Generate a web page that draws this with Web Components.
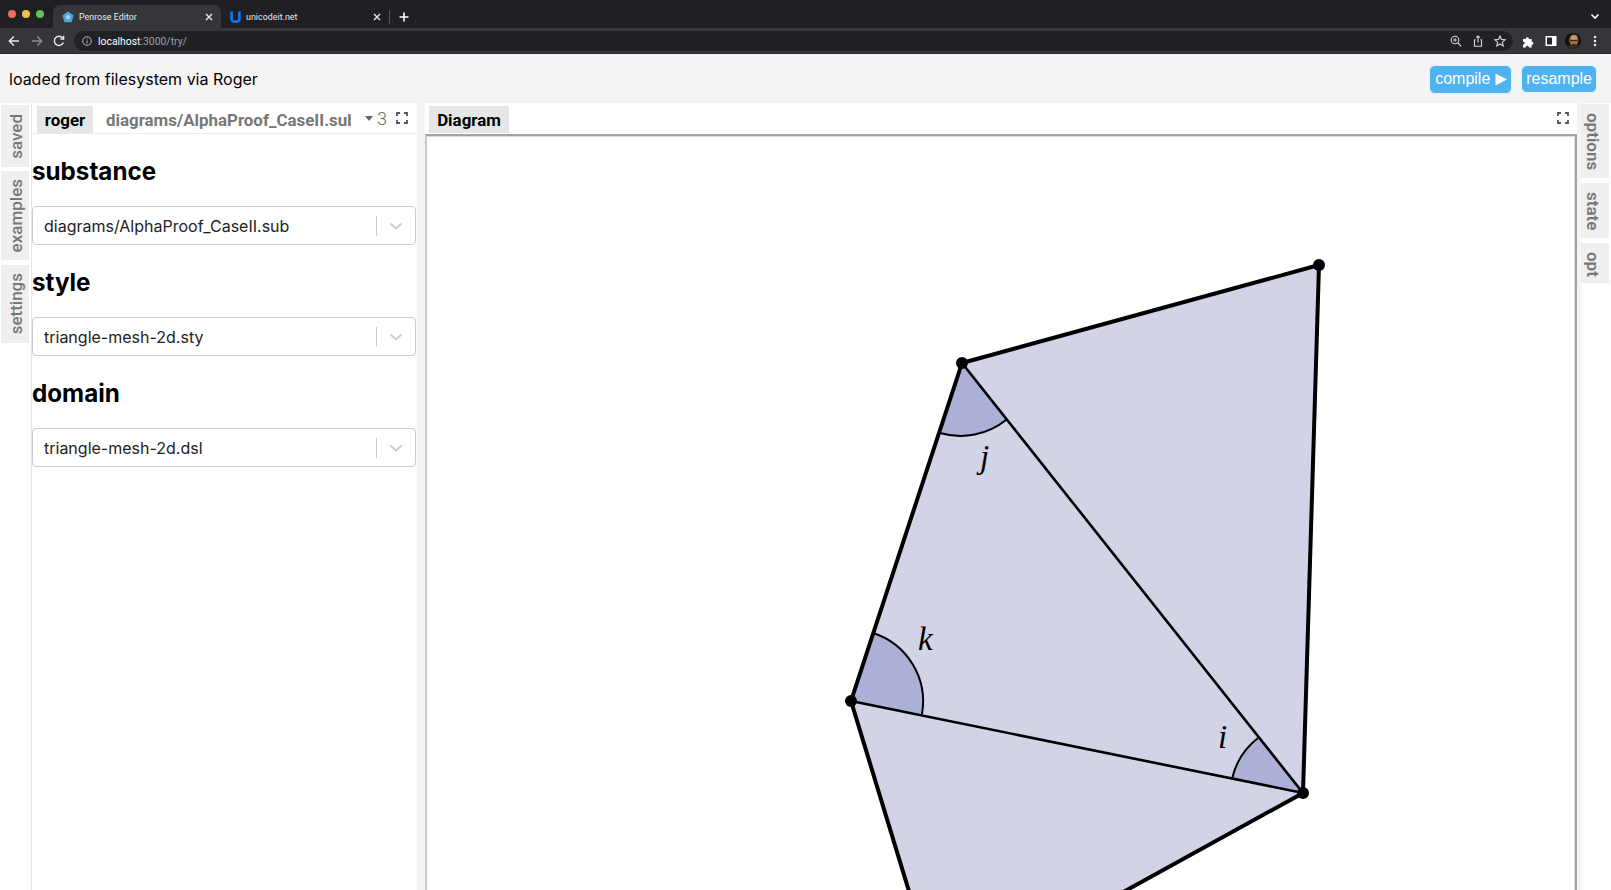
<!DOCTYPE html>
<html>
<head>
<meta charset="utf-8">
<title>Penrose Editor</title>
<style>
	html, body { margin: 0; height: 100%; overflow: hidden; background: #fff; }
	body { display: flex; flex-direction: column; height: 890px; font-family: "Inter", "Liberation Sans", sans-serif; }
</style>
</head>
<body>
<browser-chrome></browser-chrome>
<app-header>loaded from filesystem via Roger</app-header>
<editor-layout>
	<side-strip slot="left" side="left">
		<side-tab style="height:62px">saved</side-tab>
		<side-tab style="height:89px">examples</side-tab>
		<side-tab style="height:78px;margin-top:1px">settings</side-tab>
	</side-strip>
	<left-panel slot="panel">
		<file-select heading="substance">diagrams/AlphaProof_CaseII.sub</file-select>
		<file-select heading="style">triangle-mesh-2d.sty</file-select>
		<file-select heading="domain">triangle-mesh-2d.dsl</file-select>
	</left-panel>
	<diagram-panel slot="diagram"></diagram-panel>
	<side-strip slot="right" side="right">
		<side-tab style="height:74px">options</side-tab>
		<side-tab style="height:55px;margin-top:1px">state</side-tab>
		<side-tab style="height:40px;margin-top:1px">opt</side-tab>
	</side-strip>
</editor-layout>

<script>
(function () {
	//fullscreen corners used by both tab strips
	const expandIcon = `<svg width="12" height="12" viewBox="0 0 12 12" fill="none" stroke="#555" stroke-width="1.8"><path d="M1 4V1h3M8 1h3v3M11 8v3H8M4 11H1V8"/></svg>`;

	class BrowserChrome extends HTMLElement {
		constructor() {
			super();
			this.attachShadow({ mode: "open" }).innerHTML = `
			<style>
				:host { display: block; flex: none; font-family: "Roboto", "Liberation Sans", sans-serif; color: #e8eaed; }
				.strip { height: 28px; background: #1f2024; display: flex; align-items: flex-end; position: relative; }
				.lights { display: flex; gap: 6px; padding: 0 0 10px 8px; width: 53px; box-sizing: border-box; flex: none; }
				.lights i { width: 8px; height: 8px; border-radius: 50%; display: block; flex: none; }
				.tab { height: 23px; width: 168px; flex: none; box-sizing: border-box; display: flex; align-items: center; font-size: 8.8px; padding: 0 8px 0 9px; border-radius: 7px 7px 0 0; }
				.tab.on { background: #35363a; }
				.tab span { flex: 1; margin-left: 5px; white-space: nowrap; letter-spacing: 0.05px; }
				.sep { width: 1px; height: 14px; background: #55565a; margin: 0 0 4px 0; flex: none; }
				.plus { margin: 0 0 6px 9px; flex: none; display: flex; }
				.more { position: absolute; left: 1590px; top: 13px; display: flex; }
				.bar { height: 26px; background: #35363a; display: flex; align-items: center; box-sizing: border-box; border-bottom: 1px solid #26272a; padding-top: 1px; }
				.nav { display: flex; align-items: center; width: 74px; flex: none; padding-left: 8px; gap: 10.5px; box-sizing: border-box; }
				.url { width: 1439px; height: 20px; flex: none; background: #202124; border-radius: 10px; display: flex; align-items: center; box-sizing: border-box; padding: 0 0 0 8px; font-size: 10.4px; color: #9aa0a6; }
				.url b { font-weight: 400; color: #fff; }
				.url .addr { margin-left: 6px; flex: 1; }
				.url .ico { display: flex; gap: 10px; padding-right: 7px; align-items: center; }
				.tools { display: flex; align-items: center; margin-left: 9px; gap: 10px; }
				.avatar { width: 16px; height: 16px; flex: none; margin-left: -2px; }
			</style>
			<div class="strip">
				<div class="lights"><i style="background:#ed6a5e"></i><i style="background:#f4bf4f"></i><i style="background:#61c454"></i></div>
				<div class="tab on">
					<svg width="12" height="12" viewBox="0 0 12 12"><polygon points="6,0.5 11.6,4.6 9.5,11.2 2.5,11.2 0.4,4.6" fill="#4aa8e0"/><polygon points="6,3.8 8.4,5.5 7.5,8.3 4.5,8.3 3.6,5.5" fill="#9fd4f2"/></svg>
					<span>Penrose Editor</span>
					<svg width="8" height="8" viewBox="0 0 8 8" stroke="#e8eaed" stroke-width="1.4"><path d="M1 1l6 6M7 1L1 7"/></svg>
				</div>
				<div class="tab">
					<svg width="11" height="12" viewBox="0 0 11 12" fill="none" stroke="#1a73e8" stroke-width="2.6"><path d="M1.6 0.5V8a2.6 2.6 0 0 0 2.6 2.6h2.6A2.6 2.6 0 0 0 9.4 8V0.5"/></svg>
					<span>unicodeit.net</span>
					<svg width="8" height="8" viewBox="0 0 8 8" stroke="#e8eaed" stroke-width="1.4"><path d="M1 1l6 6M7 1L1 7"/></svg>
				</div>
				<div class="sep"></div>
				<div class="plus"><svg width="10" height="10" viewBox="0 0 10 10" stroke="#fff" stroke-width="1.6"><path d="M5 0.5v9M0.5 5h9"/></svg></div>
				<div class="more"><svg width="10" height="7" viewBox="0 0 10 7" fill="none" stroke="#fff" stroke-width="1.6"><path d="M1.5 1.5L5 5l3.5-3.5"/></svg></div>
			</div>
			<div class="bar">
				<div class="nav">
					<svg width="12" height="12" viewBox="0 0 12 12" fill="none" stroke="#e8eaed" stroke-width="1.4"><path d="M11 6H1.5M5.8 1.5L1.3 6l4.5 4.5"/></svg>
					<svg width="12" height="12" viewBox="0 0 12 12" fill="none" stroke="#8b8c8f" stroke-width="1.4"><path d="M1 6h9.5M6.2 1.5L10.7 6l-4.5 4.5"/></svg>
					<svg width="12" height="12" viewBox="0 0 12 12" fill="none" stroke="#e8eaed" stroke-width="1.4"><path d="M10.3 7.4A4.6 4.6 0 1 1 9.6 3"/><path d="M10.6 0.8v3.2H7.4" /></svg>
				</div>
				<div class="url">
					<svg width="10" height="10" viewBox="0 0 10 10" fill="none" stroke="#c4c7c9" stroke-width="0.9"><circle cx="5" cy="5" r="4.3"/><path d="M5 4.4v3M5 2.4v1"/></svg>
					<span class="addr"><b>localhost</b>:3000/try/</span>
					<span class="ico">
						<svg width="12" height="12" viewBox="0 0 12 12" fill="none" stroke="#d5d7d9" stroke-width="1.1"><circle cx="5" cy="5" r="3.8"/><path d="M8 8l3.3 3.3M3.2 5h3.6M5 3.2v3.6"/></svg>
						<svg width="12" height="12" viewBox="0 0 12 12" fill="none" stroke="#d5d7d9" stroke-width="1.1"><path d="M3.6 4.8H2.5v6.4h7V4.8H8.4M6 7.5V1M4.2 2.6L6 0.9l1.8 1.7"/></svg>
						<svg width="12" height="12" viewBox="0 0 12 12" fill="none" stroke="#d5d7d9" stroke-width="1.1"><polygon points="6,1 7.5,4.4 11.2,4.8 8.4,7.2 9.2,10.9 6,9 2.8,10.9 3.6,7.2 0.8,4.8 4.5,4.4"/></svg>
					</span>
				</div>
				<div class="tools">
					<svg width="13" height="13" viewBox="0 0 13 13" fill="#fff"><path d="M1 4h2.6a1.7 1.7 0 1 1 3.4 0H9.6v2.6a1.7 1.7 0 1 1 0 3.4V12.4H7a1.7 1.7 0 1 0-3.4 0H1V9.8a1.7 1.7 0 1 0 0-3.4z"/></svg>
					<svg width="12" height="12" viewBox="0 0 12 12"><rect x="0.5" y="1" width="11" height="10" fill="#fff"/><rect x="2" y="2.5" width="5" height="7" fill="#26272a"/></svg>
					<svg class="avatar" viewBox="0 0 16 16"><defs><clipPath id="av"><circle cx="8" cy="8" r="8"/></clipPath></defs><g clip-path="url(#av)"><rect width="16" height="16" fill="#17120f"/><ellipse cx="8.8" cy="7.2" rx="4.6" ry="5.8" fill="#9a6a45"/><ellipse cx="9" cy="4.4" rx="3.2" ry="2.2" fill="#c79a72"/><path d="M5.2 7h7.4v1.1H5.2zM7 11h3.6v.9H7z" fill="#33241a"/><path d="M1 16c0-2.6 3-4 7-4s7 1.4 7 4z" fill="#3b2a1e"/></g></svg>
					<svg width="4" height="12" viewBox="0 0 4 12" fill="#e8eaed" style="margin-left:2px"><circle cx="2" cy="2" r="1.3"/><circle cx="2" cy="6" r="1.3"/><circle cx="2" cy="10" r="1.3"/></svg>
				</div>
			</div>`;
		}
	}

	class AppHeader extends HTMLElement {
		constructor() {
			super();
			this.attachShadow({ mode: "open" }).innerHTML = `
			<style>
				:host { display: flex; flex: none; height: 49px; align-items: center; justify-content: space-between; background: #f4f4f4; padding: 0 14px 0 9px; box-sizing: border-box; font-size: 16px; color: #000; }
				.btns { display: flex; gap: 9px; align-items: center; margin-top: 1px; }
				button { font: 16px "Liberation Sans", Arial, sans-serif; color: #fff; background: #4fb2f1; border: 1px solid #e4f2fb; border-radius: 6px; height: 28px; padding: 0 4px; display: flex; align-items: center; gap: 5px; }
				.compile { width: 83px; height: 29px; padding: 0 0 0 5px; }
			</style>
			<span><slot></slot></span>
			<div class="btns">
				<button class="compile">compile<svg width="12" height="13" viewBox="0 0 12 13" fill="#fff"><polygon points="0.5,0.5 12,6.5 0.5,12.5"/></svg></button>
				<button>resample</button>
			</div>`;
		}
	}

	class EditorLayout extends HTMLElement {
		constructor() {
			super();
			this.attachShadow({ mode: "open" }).innerHTML = `
			<style>
				:host { display: grid; flex: 1; min-height: 0; grid-template-columns: 32px 385px 8px 1152px 34px; background: #f4f4f4; overflow: hidden; }
				.gap { background: #f4f4f4; }
			</style>
			<slot name="left"></slot>
			<slot name="panel"></slot>
			<div class="gap"></div>
			<slot name="diagram"></slot>
			<slot name="right"></slot>`;
		}
	}

	class SideStrip extends HTMLElement {
		constructor() {
			super();
			this.attachShadow({ mode: "open" }).innerHTML = `
			<style>
				:host { display: flex; flex-direction: column; gap: 4px; background: #fff; padding: 2px 0 0 1px; box-sizing: border-box; border-right: 1px solid #e6e6e6; }
				:host([side="right"]) { border-right: none; border-left: 4px solid #f4f4f4; padding: 1px 2px 0 0; --tab-rot: none; --tab-pad: 2px 4px 0 0; --tab-weight: 600; }
			</style>
			<slot></slot>`;
		}
	}

	class SideTab extends HTMLElement {
		constructor() {
			super();
			this.attachShadow({ mode: "open" }).innerHTML = `
			<style>
				:host { display: flex; align-items: center; justify-content: center; background: #efefef; flex: none; box-sizing: border-box; width: 28px; padding: var(--tab-pad, 0 0 0 1px); }
				span { writing-mode: vertical-rl; transform: var(--tab-rot, rotate(180deg)); font: var(--tab-weight, 500) 17px "Roboto", "Liberation Sans", sans-serif; color: #777; white-space: nowrap; }
			</style>
			<span><slot></slot></span>`;
		}
	}

	class LeftPanel extends HTMLElement {
		constructor() {
			super();
			this.attachShadow({ mode: "open" }).innerHTML = `
			<style>
				:host { display: block; background: #fff; min-width: 0; }
				.tabs { height: 31px; box-sizing: border-box; padding: 3px 0 0 5px; margin-right: 1px; display: flex; align-items: stretch; border-bottom: 1px solid #ececec; font: 700 16.9px "Roboto", "Liberation Sans", sans-serif; color: #777; }
				.t { display: flex; align-items: center; padding: 0 8px; white-space: nowrap; flex: none; }
				.t.on { background: #e6e6e6; color: #000; width: 56px; box-sizing: border-box; justify-content: center; padding: 0; }
				.t.clip { width: 245px; overflow: hidden; margin-left: 13px; padding: 0; display: flex; }
				.extra { display: flex; align-items: center; gap: 4px; margin-left: 14px; padding-bottom: 3px; font: 300 18px "Roboto", "Liberation Sans", sans-serif; color: #666; }
				.expand { display: flex; align-items: center; margin-left: 9px; padding-bottom: 3px; }
				.body { display: flex; flex-direction: column; padding-right: 1px; }
			</style>
			<div class="tabs">
				<div class="t on">roger</div>
				<div class="t clip">diagrams/AlphaProof_CaseII.sub</div>
				<div class="extra"><svg width="8" height="5" viewBox="0 0 8 5" fill="#666"><polygon points="0,0 8,0 4,5"/></svg>3</div>
				<div class="expand">${expandIcon}</div>
			</div>
			<div class="body"><slot></slot></div>`;
		}
	}

	class FileSelect extends HTMLElement {
		constructor() {
			super();
			this.attachShadow({ mode: "open" }).innerHTML = `
			<style>
				:host { display: block; }
				h2 { margin: 0; height: 72px; box-sizing: border-box; padding-top: 23px; font: 700 24.2px/30px "Inter", "Liberation Sans", sans-serif; color: #000; }
				.box { height: 39px; box-sizing: border-box; border: 1px solid #ccc; border-radius: 4px; display: flex; align-items: center; font-size: 16px; color: #222; padding-left: 11px; }
				.val { flex: 1; white-space: nowrap; }
				.sep { width: 1px; height: 20px; background: #ccc; }
				.chev { width: 38px; display: flex; justify-content: center; }
			</style>
			<h2></h2>
			<div class="box">
				<span class="val"><slot></slot></span>
				<span class="sep"></span>
				<span class="chev"><svg width="14" height="8" viewBox="0 0 14 8" fill="none" stroke="#ccc" stroke-width="1.8"><path d="M1.5 1.5L7 6.5l5.5-5"/></svg></span>
			</div>`;
		}

		connectedCallback() {
			this.shadowRoot.querySelector("h2").textContent = this.getAttribute("heading");
		}
	}

	class DiagramPanel extends HTMLElement {
		constructor() {
			super();
			//viewBox starts at the box's page corner, so points below are page coordinates
			this.attachShadow({ mode: "open" }).innerHTML = `
			<style>
				:host { display: flex; flex-direction: column; background: #fff; min-width: 0; }
				.tabs { height: 31px; flex: none; box-sizing: border-box; padding: 3px 0 0 4px; display: flex; align-items: stretch; justify-content: space-between; border-bottom: 1px solid transparent; font: 700 16.9px "Roboto", "Liberation Sans", sans-serif; color: #000; }
				.t { background: #e6e6e6; width: 80px; display: flex; align-items: center; justify-content: center; }
				.expand { display: flex; align-items: center; padding: 0 8px 3px 0; }
				.canvas { flex: 1; min-height: 0; border: 2px solid #a3a3a3; border-left-color: #c8c8c8; border-bottom: none; box-sizing: border-box; overflow: hidden; box-shadow: inset 0 1px #dcdcdc, inset -1px 0 #dcdcdc; }
				svg.d { display: block; }
				text { font: italic 33px "Liberation Serif", serif; fill: #000; }
			</style>
			<div class="tabs"><div class="t">Diagram</div><div class="expand">${expandIcon}</div></div>
			<div class="canvas">
				<svg class="d" width="1148" height="754" viewBox="427 136 1148 754">
					<g fill="#d2d3e6">
						<polygon points="962,363 1319,265 1303,793"/>
						<polygon points="962,363 851,701 1303,793"/>
						<polygon points="851,701 940,993 1303,793"/>
					</g>
					<g fill="#adb0d6">
						<path d="M962 363L940 433A73 73 0 0 0 1006 420Z"/>
						<path d="M851 701L873 633A72 72 0 0 1 922 714Z"/>
						<path d="M1303 793L1258 738A72 72 0 0 0 1232 779Z"/>
					</g>
					<g fill="none" stroke="#000" stroke-width="2">
						<path d="M940 433A73 73 0 0 0 1006 420"/>
						<path d="M873 633A72 72 0 0 1 922 714"/>
						<path d="M1258 738A72 72 0 0 0 1232 779"/>
					</g>
					<g fill="none" stroke="#000" stroke-width="2.6">
						<path d="M962 363L1303 793M851 701L1303 793"/>
					</g>
					<g fill="none" stroke="#000" stroke-width="4">
						<path d="M962 363L1319 265L1303 793L940 993L851 701L962 363"/>
					</g>
					<g fill="#000">
						<circle cx="962" cy="363" r="6"/>
						<circle cx="1319" cy="265" r="6"/>
						<circle cx="851" cy="701" r="6"/>
						<circle cx="1303" cy="793" r="6"/>
					</g>
					<text x="980" y="468">j</text>
					<text x="918" y="650">k</text>
					<text x="1218" y="748">i</text>
				</svg>
			</div>`;
		}
	}

	customElements.define("browser-chrome", BrowserChrome);
	customElements.define("app-header", AppHeader);
	customElements.define("editor-layout", EditorLayout);
	customElements.define("side-strip", SideStrip);
	customElements.define("side-tab", SideTab);
	customElements.define("left-panel", LeftPanel);
	customElements.define("file-select", FileSelect);
	customElements.define("diagram-panel", DiagramPanel);
})();
</script>
</body>
</html>
